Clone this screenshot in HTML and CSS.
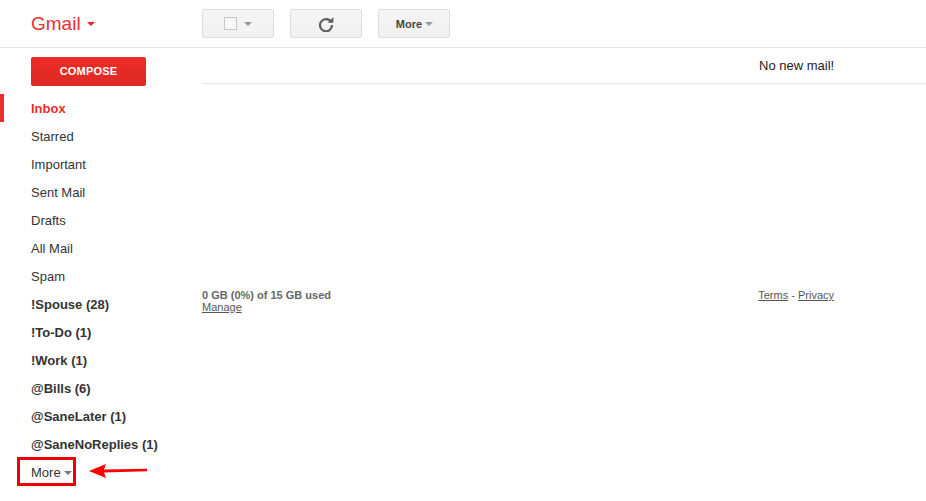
FILE: index.html
```html
<!DOCTYPE html>
<html lang="en">
<head>
<meta charset="utf-8">
<title>Gmail</title>
<link rel="stylesheet" href="styles.css">
</head>
<body>
<header class="topbar">
  <div class="brand">Gmail<span class="caret caret-red"></span></div>
  <div class="toolbar">
    <div class="btn"><span class="checkbox"></span><span class="caret caret-gray"></span></div>
    <div class="btn">
      <svg class="refresh" width="16" height="16" viewBox="0 0 16 16"><path d="M13.2 6.2A6 6 0 1 0 14 9" fill="none" stroke="#5f5f5f" stroke-width="2.2"/><path d="M9.6 6.8h5.8V1z" fill="#5f5f5f"/></svg>
    </div>
    <div class="btn btn-text">More<span class="caret caret-gray caret-near"></span></div>
  </div>
</header>
<div class="layout">
  <aside class="sidebar">
    <div class="compose">COMPOSE</div>
    <nav class="nav">
      <a class="nav-item active">Inbox</a>
      <a class="nav-item">Starred</a>
      <a class="nav-item">Important</a>
      <a class="nav-item">Sent Mail</a>
      <a class="nav-item">Drafts</a>
      <a class="nav-item">All Mail</a>
      <a class="nav-item">Spam</a>
      <a class="nav-item bold">!Spouse (28)</a>
      <a class="nav-item bold">!To-Do (1)</a>
      <a class="nav-item bold">!Work (1)</a>
      <a class="nav-item bold">@Bills (6)</a>
      <a class="nav-item bold">@SaneLater (1)</a>
      <a class="nav-item bold">@SaneNoReplies (1)</a>
      <a class="nav-item more">More<span class="caret caret-dark"></span>
        <span class="highlight"></span>
        <svg class="arrow" width="60" height="18" viewBox="0 0 60 18"><path d="M0 9 L17 2 L15 7.5 L58 6.8 L58 9.2 L15 10.5 L17 16z" fill="#f00"/></svg>
      </a>
    </nav>
  </aside>
  <main class="content">
    <div class="notice">No new mail!</div>
    <footer class="foot">
      <div>
        <div class="usage">0 GB (0%) of 15 GB used</div>
        <a class="link">Manage</a>
      </div>
      <div class="legal"><a class="link">Terms</a> - <a class="link">Privacy</a></div>
    </footer>
  </main>
</div>
</body>
</html>
```

FILE: styles.css
```css
* { box-sizing: border-box; }
html, body { margin: 0; padding: 0; }
body {
  width: 926px;
  height: 501px;
  overflow: hidden;
  background: #fff;
  font-family: "Liberation Sans", Arial, sans-serif;
  color: #222;
}
.topbar {
  display: flex;
  height: 48px;
  border-bottom: 1px solid #e5e5e5;
}
.brand {
  width: 202px;
  padding: 12px 0 0 31px;
  font-size: 19px;
  line-height: 24px;
  color: #ee2c2c;
}
.caret {
  display: inline-block;
  width: 0;
  height: 0;
  border-left: 4px solid transparent;
  border-right: 4px solid transparent;
  border-top: 4px solid #888;
}
.caret-red { border-top-color: #e22; margin-left: 6px; vertical-align: 4px; }
.caret-gray { border-top-color: #999; margin-left: 7px; }
.caret-near { margin-left: 3px; vertical-align: 2px; }
.caret-dark { border-top-color: #777; margin-left: 3px; vertical-align: 2px; }
.toolbar {
  display: flex;
  gap: 16px;
  padding-top: 9px;
}
.btn {
  width: 72px;
  height: 29px;
  display: flex;
  align-items: center;
  justify-content: center;
  background: linear-gradient(#f5f5f5, #f1f1f1);
  border: 1px solid #dcdcdc;
  border-radius: 2px;
}
.btn-text {
  font-size: 11px;
  font-weight: bold;
  color: #444;
  padding-left: 1px;
}
.checkbox {
  width: 13px;
  height: 13px;
  border: 1px solid #c6c6c6;
  background: #f8f8f8;
}
.layout { display: flex; }
.sidebar { width: 202px; flex: none; }
.compose {
  width: 115px;
  height: 29px;
  margin: 9px 0 8px 31px;
  background: linear-gradient(#ee2b26, #dd2a25);
  border-radius: 2px;
  color: #fff;
  font-size: 11px;
  font-weight: bold;
  letter-spacing: 0.2px;
  line-height: 28px;
  text-align: center;
}
.nav-item {
  display: block;
  position: relative;
  height: 28px;
  padding-left: 31px;
  font-size: 13px;
  line-height: 29px;
  color: #333;
  white-space: nowrap;
}
.bold { font-weight: bold; }
.active {
  font-weight: bold;
  color: #ee2c2c;
  border-left: 4px solid #ee2c2c;
  padding-left: 27px;
}
.highlight {
  position: absolute;
  left: 17px;
  top: -1px;
  width: 59px;
  height: 29px;
  border: 3px solid #ee0000;
}
.arrow {
  position: absolute;
  left: 89px;
  top: 4px;
}
.content { flex: 1; min-width: 0; }
.notice {
  height: 36px;
  border-bottom: 1px solid #e5e5e5;
  padding-left: 557px;
  font-size: 13px;
  line-height: 35px;
  color: #222;
}
.foot {
  display: flex;
  justify-content: space-between;
  width: 632px;
  margin-top: 205px;
  font-size: 11px;
  line-height: 12px;
  color: #666;
}
.usage { font-weight: bold; color: #666; }
.link { color: #555; text-decoration: underline; }
```
